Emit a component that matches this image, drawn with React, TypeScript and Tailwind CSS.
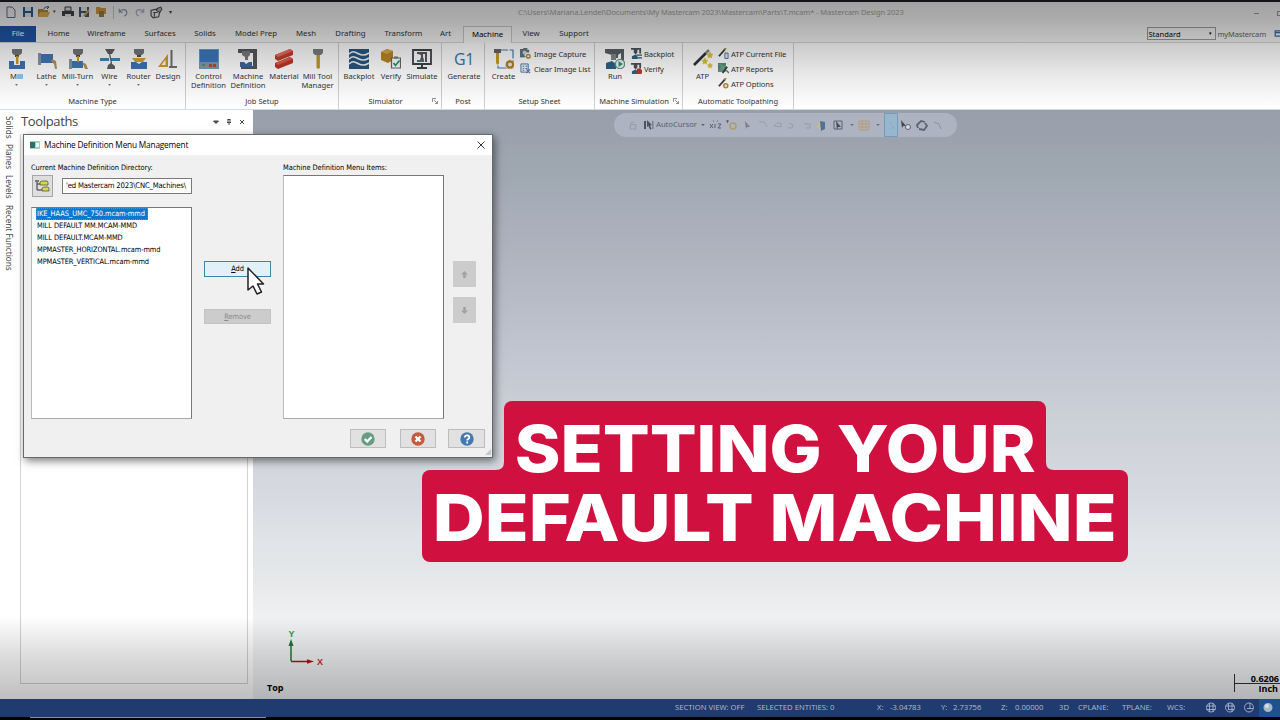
import type { ReactNode } from "react";

type Kids = { children?: ReactNode };

function Svg({ children, className = "h-5 w-5", box = "0 0 20 20" }: Kids & { className?: string; box?: string }) {
  return (
    <svg viewBox={box} className={`block shrink-0 ${className}`} fill="none">
      {children}
    </svg>
  );
}

const Spindle = () => (
  <>
    <path d="M5 0h10v4l-2 2H7L5 4z" fill="#74777b" />
    <path d="M8 6h4v2H8z" fill="#4c4f53" />
  </>
);

const MillIcon = () => (
  <Svg>
    <path d="M2 12h5v4h6v-4h5v8H2z" fill="#3b74b5" />
    <Spindle />
    <path d="M9 7h2.4v8H9z" fill="#c79a2b" />
  </Svg>
);
const LatheIcon = () => (
  <Svg>
    <path d="M1 4h3v12H1z" fill="#8a96a3" />
    <path d="M4 5h12v9H4z" fill="#3f78b5" />
    <path d="M15 10l4 2 1 8h-2l-1-5-3-3z" fill="#b59552" />
  </Svg>
);
const MillTurnIcon = () => (
  <Svg>
    <path d="M1 10h3v10H1z" fill="#8a96a3" />
    <path d="M4 12h11v7H4z" fill="#3f78b5" />
    <Spindle />
    <path d="M9 7h2v6H9z" fill="#c79a2b" />
    <path d="M14 13l4 2 2 5h-3z" fill="#b59552" />
  </Svg>
);
const WireIcon = () => (
  <Svg>
    <path d="M0 9h9v3H0zM11 9h9v3h-9z" fill="#3f86b5" />
    <path d="M5 0h10l-3 5H8zM7 20l1-4 3-2 4 3v3z" fill="#5d6064" />
    <path d="M9.500 4l2 11" stroke="#555" strokeWidth="1.2" />
  </Svg>
);
const RouterIcon = () => (
  <Svg>
    <path d="M2 13h5l3 2 3-2h5v7H2z" fill="#3b74b5" />
    <Spindle />
    <path d="M3 9h14l-3 4H6z" fill="#d6a32c" />
  </Svg>
);
const DesignIcon = () => (
  <Svg>
    <path d="M10 5v13H0zM7.500 10.500l-4 5.500h4z" fill="#d6982c" fillRule="evenodd" />
    <path d="M13.500 1v17M11 18h8" stroke="#6d7073" strokeWidth="2" />
  </Svg>
);
const ControlIcon = () => (
  <Svg>
    <path d="M0 0h20v20H0z" fill="#6f9bc9" />
    <path d="M1 1h18v12H1z" fill="#3b78bd" />
    <path d="M1 14h18v5H1z" fill="#8c979f" />
    <path d="M3 15h3v2H3z" fill="#37a06a" />
    <path d="M10 15h3v3h-3zM14 15h3v3h-3z" fill="#c14335" />
  </Svg>
);
const MachineDefIcon = () => (
  <Svg>
    <path d="M0 0h19v20H3v-3h12V4H0z" fill="#54575b" />
    <path d="M4 2h8v4l-2 2v3H7V8L4 6z" fill="#777a7e" />
    <path d="M2 13h4l2 2 3-2h3v5H2z" fill="#38699e" />
  </Svg>
);
const MaterialIcon = () => (
  <Svg>
    <path d="M1 6L16 0l3 2v4L4 12l-3-2z" fill="#c33c2c" />
    <path d="M1 6l3 2 15-6-3-2z" fill="#e0705f" />
    <path d="M1 14l15-6 3 2v4L4 20l-3-2z" fill="#bd3627" />
    <path d="M1 14l3 2 15-6-3-2z" fill="#da5c4a" />
  </Svg>
);
const ToolIcon = () => (
  <Svg>
    <path d="M5 0h10v4l-2 2H7L5 4z" fill="#7a7d80" />
    <path d="M8.5 6h3.4v13l-1.7 1-1.7-1z" fill="#c2972f" />
  </Svg>
);
const BackplotIcon = () => (
  <Svg>
    <path d="M0 0h20v20H0z" fill="#28567f" />
    <path
      d="M0 5c4-4 6-2 10 0s7 1 10-1M0 10c4-4 6-2 10 0s7 1 10-1M0 15c4-4 6-2 10 0s7 1 10-1"
      stroke="#eef4f8"
      strokeWidth="1.6"
    />
  </Svg>
);
const VerifyIcon = () => (
  <Svg>
    <path d="M0 3l6-3 6 2v9l-5 3-7-3z" fill="#ba8526" />
    <path d="M0 3l6 2 6-3-6-2z" fill="#d8a94c" />
    <path d="M10.500 9h9v10h-9z" fill="#fff" stroke="#666" strokeWidth="1.2" />
    <path d="M13 7.5h4v2h-4z" fill="#777" />
    <path d="M12.500 14l2 2.500 4-5" stroke="#239070" strokeWidth="1.7" />
  </Svg>
);
const SimulateIcon = () => (
  <Svg>
    <path d="M1 1h18v14H1z" fill="#fff" stroke="#3f4246" strokeWidth="1.8" />
    <path d="M10 15v4M5 19h10" stroke="#3f4246" strokeWidth="2" />
    <path d="M5 3h10v10h-2V5h-2v3l1 3H8l1-3V6L6 5H5z" fill="#575a5e" />
    <path d="M5 11h7v2H5z" fill="#4d7880" />
  </Svg>
);
const GenerateIcon = () => (
  <span className="flex h-5 items-center font-['Open_Sans',sans-serif] text-[16px] tracking-[-0.5px] text-[#3a729f]">G1</span>
);
const CreateIcon = () => (
  <Svg>
    <path d="M2 1h17v18H4V6" stroke="#4a7ca8" strokeWidth="1.2" strokeDasharray="12 1.5" />
    <path d="M0 0h7v4H0z" fill="#62656a" />
    <path d="M2 4h3v10l-1.5 2L2 14z" fill="#ca9a2e" />
    <circle cx="16" cy="15.5" r="5" fill="#e9e9e9" />
    <circle cx="16" cy="15.5" r="3" stroke="#b47c25" strokeWidth="2" />
    <circle cx="16" cy="15.5" r="4" stroke="#b47c25" strokeWidth="1" strokeDasharray="1.8 1.6" />
  </Svg>
);
const RunIcon = () => (
  <Svg>
    <path d="M0 0h19v12h-3V4l-3 2v3H7V6L0 4z" fill="#5a6064" />
    <path d="M6 5h5v6H6z" fill="#80868a" />
    <path d="M1 14l6-2 4 3v5H1z" fill="#2d6385" />
    <circle cx="15" cy="15" r="4.6" fill="#f4f8f5" stroke="#5a9c8c" strokeWidth="1.3" />
    <path d="M13.5 12l4.5 3-4.5 3z" fill="#3a8e7b" />
  </Svg>
);
const WandIcon = () => (
  <Svg>
    <path d="M1 16L13 4" stroke="#303236" strokeWidth="2.6" />
    <path d="M13 4l3-3" stroke="#8a8a8a" strokeWidth="2.6" />
    <path
      d="M17 3l1 2 2 .5-1.600 1.500.3 2L17 8l-2 1 .4-2L14 5.500l2-.5zM12 9l1 2 2 .5-1.600 1.500.3 2L12 14l-2 1 .4-2L9 11.500l2-.5zM17 14l.8 1.600 1.700.3-1.200 1.200.2 1.700-1.500-.8-1.500.8.3-1.700-1.300-1.200 1.700-.3z"
      fill="#dcc02f"
      stroke="#dcc02f"
      strokeWidth="0.6"
    />
  </Svg>
);

const small = "h-[11px] w-[11px]";
const box12 = "0 0 12 12";
const CaptureIcon = () => (
  <Svg className={small} box={box12}>
    <path d="M0 1h3l1-1h4v2h2v3H0zM0 5h5v5H0z" fill="#66747f" />
    <circle cx="5" cy="5" r="2.200" fill="#c9d6de" />
    <circle cx="9" cy="9" r="2" stroke="#b48a35" strokeWidth="1.600" />
    <path d="M0 9h6v1H0z" fill="#3f7f85" />
  </Svg>
);
const ClearIcon = () => (
  <Svg className={small} box={box12}>
    <path d="M1 1h8v9H1z" fill="#e9f0f8" stroke="#4c74a0" />
    <path d="M3 3.500h1.500M6 3.500h2M3 6h1.500M6 6h2M3 8h1.500" stroke="#4c74a0" />
    <path d="M7 7l4 4M11 7l-4 4" stroke="#7b6fb0" strokeWidth="1.400" />
  </Svg>
);
const MiniMachine = ({ red }: { red?: boolean }) => (
  <Svg className={small} box={box12}>
    <path d="M0 0h11v2H7v3L5 7 3 5V2H0zM9 2h2v4H9z" fill="#4c5357" />
    <path d="M1 9l4-2 2 2v3H1z" fill="#2c6480" />
    {red ? <path d="M7 6h3l2 2v3l-1 1H7l-1-2V8z" fill="#b73a2d" /> : <path d="M6 7h6v1.500H6zM6 10h6v1.500H6z" fill="#2f5577" />}
  </Svg>
);
const MiniWand = ({ kind }: { kind: "file" | "report" | "gear" }) => (
  <Svg className={small} box={box12}>
    {kind === "report" && <path d="M0 0h8v9H0zM2 2v5M4 2h3" fill="#6ea58b" stroke="#3d7c68" />}
    <path d={kind === "report" ? "M5 11l5-7" : "M1 9l7-8"} stroke="#3b3d40" strokeWidth="2" />
    {kind !== "report" && <path d="M7 2l2-2" stroke="#b39a48" strokeWidth="1.600" />}
    {kind === "file" && <path d="M7.500 5.500h3.500v6H7.500z" fill="#e8eef5" stroke="#416f9d" />}
    {kind === "gear" && <circle cx="8.500" cy="8.500" r="2.200" fill="#f6efe2" stroke="#c0892e" strokeWidth="1.700" />}
    {kind === "report" && <path d="M9 8l3 3" stroke="#498a58" strokeWidth="1.500" />}
  </Svg>
);

type Tool = { icon: ReactNode; label: string; second?: string; arrow?: boolean; cell: string };

function ToolButton({ icon, label, second, arrow, cell }: Tool) {
  return (
    <div className={`flex shrink-0 flex-col items-center ${cell}`}>
      {icon}
      <span className="mt-[3px] h-[9px] leading-[9px] whitespace-nowrap">{label}</span>
      {second && <span className="h-[9px] leading-[9px] whitespace-nowrap">{second}</span>}
      {arrow && (
        <svg viewBox="0 0 4 2" className="mt-[3px] h-[2px] w-[3px]" fill="#555">
          <path d="M0 0h4L2 2z" />
        </svg>
      )}
    </div>
  );
}

function Launcher() {
  return (
    <svg viewBox="0 0 6 6" className="h-[6px] w-[6px]" fill="none" stroke="#777" strokeWidth="0.8">
      <path d="M0.500 4V0.500H4M2 2l3.500 3.500M5.500 3v2.500H3" />
    </svg>
  );
}

function Group({ title, width, pad, launcher, children }: Kids & { title: string; width: string; pad: string; launcher?: boolean }) {
  return (
    <section className={`flex h-full shrink-0 flex-col border-r border-[#d0d0d0] ${width}`}>
      <div className={`flex h-[52px] pt-[6px] ${pad}`}>{children}</div>
      <div className="flex h-[12px] items-center">
        <span className="flex-1 text-center text-[7.500px] leading-[10px] whitespace-nowrap">{title}</span>
        {launcher && (
          <span className="pr-[3px]">
            <Launcher />
          </span>
        )}
      </div>
    </section>
  );
}

function SmallList({ rows, gap }: { rows: [ReactNode, string][]; gap: string }) {
  return (
    <div className="-mt-[3px] flex flex-col">
      {rows.map(([icon, label]) => (
        <div key={label} className={`flex h-[15px] items-center tracking-[-0.080px] ${gap}`}>
          {icon}
          <span className="leading-[10px] whitespace-nowrap">{label}</span>
        </div>
      ))}
    </div>
  );
}

function Ribbon() {
  return (
    <div className="flex h-[67px] border-b border-[#d3dbe2] bg-white text-[7.600px] text-[#343434]">
      <Group title="Machine Type" width="w-[186px]" pad="">
        <ToolButton icon={<MillIcon />} label="Mill" arrow cell="w-[33px]" />
        <ToolButton icon={<LatheIcon />} label="Lathe" arrow cell="w-[27px]" />
        <ToolButton icon={<MillTurnIcon />} label="Mill-Turn" arrow cell="w-[35px]" />
        <ToolButton icon={<WireIcon />} label="Wire" arrow cell="w-[29px]" />
        <ToolButton icon={<RouterIcon />} label="Router" arrow cell="w-[29px]" />
        <ToolButton icon={<DesignIcon />} label="Design" cell="w-[30px]" />
      </Group>
      <Group title="Job Setup" width="w-[153px]" pad="pl-[2px]">
        <ToolButton icon={<ControlIcon />} label="Control" second="Definition" cell="w-[41px]" />
        <ToolButton icon={<MachineDefIcon />} label="Machine" second="Definition" cell="w-[38px]" />
        <ToolButton icon={<MaterialIcon />} label="Material" cell="w-[34px]" />
        <ToolButton icon={<ToolIcon />} label="Mill Tool" second="Manager" cell="w-[33px]" />
      </Group>
      <Group title="Simulator" width="w-[103px]" pad="pl-[3px]" launcher>
        <ToolButton icon={<BackplotIcon />} label="Backplot" cell="w-[34px]" />
        <ToolButton icon={<VerifyIcon />} label="Verify" cell="w-[30px]" />
        <ToolButton icon={<SimulateIcon />} label="Simulate" cell="w-[32px]" />
      </Group>
      <Group title="Post" width="w-[43px]" pad="pl-[2px]">
        <ToolButton icon={<GenerateIcon />} label="Generate" cell="w-[40px]" />
      </Group>
      <Group title="Setup Sheet" width="w-[110px]" pad="pl-[2px]">
        <ToolButton icon={<CreateIcon />} label="Create" cell="w-[33px]" />
        <SmallList gap="gap-[3px]" rows={[[<CaptureIcon />, "Image Capture"], [<ClearIcon />, "Clear Image List"]]} />
      </Group>
      <Group title="Machine Simulation" width="w-[88px]" pad="pl-[4px]" launcher>
        <ToolButton icon={<RunIcon />} label="Run" cell="w-[32px]" />
        <SmallList gap="gap-[2px]" rows={[[<MiniMachine />, "Backplot"], [<MiniMachine red />, "Verify"]]} />
      </Group>
      <Group title="Automatic Toolpathing" width="w-[111px]" pad="pl-[4px]">
        <ToolButton icon={<WandIcon />} label="ATP" cell="w-[31px]" />
        <SmallList
          gap="gap-[2px]"
          rows={[
            [<MiniWand kind="file" />, "ATP Current File"],
            [<MiniWand kind="report" />, "ATP Reports"],
            [<MiniWand kind="gear" />, "ATP Options"],
          ]}
        />
      </Group>
    </div>
  );
}

function QuickAccess() {
  return (
    <div className="flex h-full w-[518px] shrink-0 items-center pb-[2px] pl-[5px]">
      <Svg className="mr-[5px] h-[12px] w-[12px]" box={box12}>
        <path d="M2 1h5l3 3v7.500H2z" fill="#eee" stroke="#58718c" />
      </Svg>
      <Svg className="mr-[4px] h-[12px] w-[12px]" box={box12}>
        <path d="M1 1h10v10H1z" fill="#285a93" />
        <path d="M3 1h6v4H3zM3 7h6v4H3z" fill="#e2e8ee" />
      </Svg>
      <Svg className="h-[12px] w-[12px]" box={box12}>
        <path d="M0 3h5l1 1h4v7H0z" fill="#b3853a" />
        <path d="M2 6h10l-2 5H0z" fill="#d9ab55" />
        <path d="M6 3c0-2 2-2 4-2M9 0l2 1-2 2" stroke="#375f84" />
      </Svg>
      <span className="mr-[6px] ml-[3px] text-[5px] text-[#333]">▾</span>
      <Svg className="mr-[4px] h-[12px] w-[12px]" box={box12}>
        <path d="M3 1h6v4H3z" fill="#ddd" stroke="#3b3e42" />
        <path d="M0 5h12v5H0z" fill="#3f4347" />
        <path d="M3 8h6v3H3z" fill="#e6e6e6" />
      </Svg>
      <Svg className="mr-[5px] h-[12px] w-[12px]" box={box12}>
        <path d="M1 1h10v10H1z" fill="#3b5877" />
        <path d="M3 1h6v4H3zM3 7h4v4H3z" fill="#e2e8ee" />
        <path d="M6 10l5-6" stroke="#d99b33" strokeWidth="2" />
      </Svg>
      <Svg className="mr-[6px] h-[12px] w-[12px]" box={box12}>
        <path d="M1 1h4l1 1h5v6H1z" fill="#cf9b43" />
        <path d="M4 5h5v6H4z" fill="#9d7a45" />
      </Svg>
      <span className="mr-[4px] h-[13px] w-px bg-[#c2c2c2]" />
      <Svg className="mr-[5px] h-[10px] w-[11px]" box={box12}>
        <path d="M1 2v4h4M1 6c2-4 9-4 9 1 0 2-1 3-3 4" stroke="#8b9bb0" strokeWidth="1.500" />
      </Svg>
      <Svg className="mr-[5px] h-[10px] w-[11px]" box={box12}>
        <path d="M11 2v4H7M11 6c-2-4-9-4-9 1 0 2 1 3 3 4" stroke="#a8b4c2" strokeWidth="1.500" />
      </Svg>
      <Svg className="h-[13px] w-[13px]" box={box12}>
        <path d="M1 4l5-1 3 2-1 5-5 1-2-2zM3 6h4M4 6v4" stroke="#4d5155" strokeWidth="1.100" />
        <path d="M7 2l3-1 1 2-2 3-3-2z" fill="#b5b8ba" stroke="#4d5155" />
      </Svg>
      <span className="ml-[6px] text-[6px] text-[#444]">▾</span>
    </div>
  );
}

const tabs: [string, string][] = [
  ["Home", "w-[45px]"],
  ["Wireframe", "w-[51px]"],
  ["Surfaces", "w-[56px]"],
  ["Solids", "w-[34px]"],
  ["Model Prep", "w-[68px]"],
  ["Mesh", "w-[32px]"],
  ["Drafting", "w-[57px]"],
  ["Transform", "w-[49px]"],
  ["Art", "w-[35px]"],
  ["Machine", "w-[49px]"],
  ["View", "w-[38px]"],
  ["Support", "w-[48px]"],
];

function TabRow() {
  return (
    <div className="flex h-[17px] border-b border-[#d6d6d6] text-[7.800px] text-[#333]">
      <div className="flex w-[36px] items-center justify-center bg-[#2155a8] text-white">File</div>
      {tabs.map(([t, w]) => (
        <div
          key={t}
          className={`flex shrink-0 items-center justify-center whitespace-nowrap ${w} ${
            t === "Machine" ? "-mb-px border-x border-t border-[#c8c8c8] bg-[#fafafa] text-black" : ""
          }`}
        >
          {t}
        </div>
      ))}
      <div className="ml-auto flex h-[15px] items-center">
        <div className="flex h-[13px] w-[69px] items-center justify-between border border-[#9b9b9b] bg-[#f5f5f5] px-[1px] text-[7.500px] text-black">
          <span className="leading-[10px]">Standard</span>
          <span className="pr-[2px] text-[5px]">▾</span>
        </div>
        <span className="ml-[2px] pt-[3px] text-[7.500px] tracking-[-0.150px] text-[#666]">myMastercam</span>
        <svg viewBox="0 0 6 9" className="ml-[8px] h-[8px] w-[6px]" fill="none" stroke="#3b6da5" strokeWidth="1.400">
          <path d="M7 1H1v6h6M1 3h6" />
        </svg>
      </div>
    </div>
  );
}

function Toolpaths() {
  return (
    <div className="flex w-[234px] shrink-0 flex-col bg-white">
      <div className="flex h-[24px] items-center">
        <span className="w-[192px] pl-[2px] font-['Open_Sans','Noto_Sans',sans-serif] text-[13px] tracking-[-0.350px] text-[#404448]">
          Toolpaths
        </span>
        <svg viewBox="0 0 36 8" className="h-[8px] w-[36px]" fill="none" stroke="#444" strokeWidth="1">
          <path d="M2.500 3h5L5 5.500z" fill="#444" />
          <path d="M16.500 1.500h3M17 1.500v3M19 1.500v3M16 4.500h4M18 4.500v2.500M29 2l4 4M33 2l-4 4" />
        </svg>
      </div>
      <div className="ml-px h-[550px] w-[228px] border border-t-0 border-[#d2d2d2] bg-white" />
    </div>
  );
}

function SideTabs() {
  const items: [string, string][] = [
    ["Solids", "h-[28px]"],
    ["Planes", "h-[31px]"],
    ["Levels", "h-[30px]"],
    ["Recent Functions", "h-[70px]"],
  ];
  return (
    <div className="flex w-[19px] shrink-0 flex-col items-center bg-white pt-[6px] pr-[2px]">
      {items.map(([t, h]) => (
        <span key={t} className={`text-[8.200px] leading-[12px] whitespace-nowrap text-[#43464a] [writing-mode:vertical-rl] ${h}`}>
          {t}
        </span>
      ))}
    </div>
  );
}

function AutoCursorBar() {
  return (
    <div className="flex h-[24px] w-[343px] items-center rounded-full bg-[#adb3c0] pl-[15px] text-[7.800px] text-[#596270]">
      <svg viewBox="0 0 8 10" className="h-[9px] w-[8px] opacity-40" fill="none" stroke="#6b7482">
        <path d="M2 4V2c0-1 3-1 3 0M1 4h6v5H1z" />
      </svg>
      <svg viewBox="0 0 10 10" className="ml-[7px] h-[10px] w-[10px]" fill="#4b5460">
        <path d="M0 1h2v8H0zM3 0l5 5-2 .5L7.500 9 6 9.500 4.500 6 3 7z" />
        <path d="M8 1h1.500v8H8z" opacity=".5" />
      </svg>
      <span className="ml-[2px] w-[45px] tracking-[-0.100px] whitespace-nowrap">AutoCursor</span>
      <svg viewBox="0 0 244 24" className="h-[24px] w-[244px]" fill="none" stroke="#5b6472">
        <path d="M0 11h4l-2 2z" fill="#5b6472" stroke="none" />
        <path d="M9 15l3-4M9 11l3 4M14 11v4M17 11h3l-3 4h3M12 8h1M16 8h1" />
        <path d="M25 8h3M26.500 7v3" />
        <circle cx="32" cy="13" r="3" stroke="#b49a66" strokeWidth="1.500" />
        <path d="M44 8l5 6h-3l-1 2z" fill="#777f8d" stroke="none" />
        <path d="M58 9h5l3 5M73 13l3-3h4v4zM88 10l4 2-1 3h-4M103 11h6v4h-4" opacity=".25" />
        <path d="M115 14l4-6 4 2v5l-4 2z" fill="#d1bb80" stroke="none" opacity=".7" />
        <path d="M119 8l5 1v7l-4 2z" fill="#4e7396" stroke="none" />
        <path d="M133 8v8h8M133 8h8v8" />
        <path d="M135 8l5 6h-3l-1 3z" fill="#424c58" stroke="none" />
        <path d="M149 11h4l-2 2z" fill="#6b7482" stroke="none" />
        <path d="M158 8h10v9h-10zM158 11h10M158 14h10M161.500 8v9M165 8v9" stroke="#b69e7a" />
        <path d="M175 11h4l-2 2z" fill="#6b7482" stroke="none" />
        <path d="M183.500 .5h13v23h-13z" fill="#98b6ce" stroke="#739cba" />
        <path d="M188 9l5 5M190 15h4" stroke="#82b0bd" />
        <path d="M200 7l5 6h-3l-1 2z" fill="#3f4954" stroke="none" />
        <circle cx="207" cy="14" r="2.500" fill="#d8dde2" />
        <path d="M217 15l-1-3 4-4 4 1M218 16l5 1 3-4-2-3" strokeWidth="1.800" />
        <path d="M233 9l5 2 2 5" opacity=".4" />
      </svg>
    </div>
  );
}

function Viewport() {
  return (
    <main className="flex flex-1 flex-col bg-[linear-gradient(180deg,#989eaa_0%,#a0a9b2_12%,#a6acb8_16%,#b0b5c0_26%,#c1c5d0_41%,#cfd3d9_56%,#d7dbe1_66%,#dfe3e7_72%,#e6e8ea_80%,#f1f2f4_87%,#f0f1f2_100%)]">
      <div className="flex h-[519px] pt-[3px] pl-[361px]">
        <AutoCursorBar />
      </div>
      <svg viewBox="0 0 45 38" className="ml-[32px] h-[38px] w-[45px] font-['Liberation_Sans',sans-serif]">
        <path d="M6 32V16" stroke="#1d7a2d" strokeWidth="1.500" />
        <path d="M6 10l2.500 7h-5z" fill="#1d7a2d" />
        <path d="M6 32.500h16" stroke="#a31b1b" strokeWidth="1.500" />
        <path d="M29 32.500l-7-2.200v4.400z" fill="#a31b1b" />
        <text x="3.500" y="7.500" fontSize="9" fontWeight="bold" fill="#2d9a3a">Y</text>
        <text x="32" y="36" fontSize="9" fontWeight="bold" fill="#cf2429">X</text>
      </svg>
      <div className="flex flex-1 justify-between pt-[7px] pl-[14px] font-['Open_Sans',sans-serif] text-[9px] font-bold text-black">
        <span className="pt-[7px] leading-[13px]">Top</span>
        <div className="flex h-[18px] w-[46px] flex-col border-l border-[#333] text-right">
          <span className="border-b border-[#333] pr-px leading-[9px]">0.6206</span>
          <span className="pr-[2px] leading-[9px]">Inch</span>
        </div>
      </div>
    </main>
  );
}

const status: [string, string][] = [
  ["SECTION VIEW: OFF", "w-[82px]"],
  ["SELECTED ENTITIES: 0", "w-[120px]"],
  ["X:", "w-[13px]"],
  ["-3.04783", "w-[51px]"],
  ["Y:", "w-[12px]"],
  ["2.73756", "w-[48px]"],
  ["Z:", "w-[14px]"],
  ["0.00000", "w-[44px]"],
  ["3D", "w-[19px]"],
  ["CPLANE:", "w-[44px]"],
  ["TPLANE:", "w-[45px]"],
  ["WCS:", "w-[38px]"],
];

function StatusBar() {
  return (
    <footer className="flex h-[21px] flex-col bg-black">
      <div className="flex h-[18px] items-center bg-[#1f3b70] pl-[675px] font-['Open_Sans',sans-serif] text-[7.700px] text-[#b3bccb]">
        {status.map(([t, w]) => (
          <span key={t} className={`shrink-0 whitespace-nowrap ${w}`}>
            {t}
          </span>
        ))}
        <svg viewBox="0 0 75 18" className="h-[18px] w-[75px]" fill="none" stroke="#a9b5c7" strokeWidth=".9">
          <path d="M54 0h21v18H54z" fill="#21508e" stroke="none" />
          <circle cx="6" cy="8.500" r="4.500" />
          <path d="M1.500 7h9M1.500 10.500h9M4.500 4v9M8 4v9" />
          <circle cx="25" cy="8.500" r="4.500" />
          <path d="M20.500 7h9M23 10.500h6M23.500 4v7M27 4v9" />
          <circle cx="44" cy="8.500" r="4.500" />
          <path d="M42 9.500h6M45 4v6" />
          <circle cx="63" cy="8.500" r="4.500" fill="#a8b8c5" stroke="none" />
          <circle cx="62" cy="7" r="2" fill="#d6dfe5" stroke="none" />
        </svg>
      </div>
      <div className="ml-[30px] h-px w-[236px] bg-[#8290a3]" />
    </footer>
  );
}

const files: [string, string][] = [
  ["IKE_HAAS_UMC_750.mcam-mmd", "tracking-[-0.060px]"],
  ["MILL DEFAULT MM.MCAM-MMD", "tracking-[-0.050px]"],
  ["MILL DEFAULT.MCAM-MMD", "tracking-[-0.050px]"],
  ["MPMASTER_HORIZONTAL.mcam-mmd", "tracking-[-0.100px]"],
  ["MPMASTER_VERTICAL.mcam-mmd", "tracking-[-0.100px]"],
];

function FooterButton({ color, glyph, width }: { color: string; glyph: ReactNode; width: string }) {
  return (
    <div className={`flex h-[19px] items-center justify-center border border-[#bdbdbd] bg-[#e1e1e1] ${width}`}>
      <svg viewBox="0 0 14 14" className="h-[14px] w-[14px]" fill="none" stroke="#fff" strokeWidth="2.300">
        <circle cx="7" cy="7" r="6.700" fill={color} stroke="none" />
        {glyph}
      </svg>
    </div>
  );
}

const listBox = "border border-t-[#777] border-r-[#777] border-b-[#aaa] border-l-[#bbb] bg-white";

function ArrowButton({ d }: { d: string }) {
  return (
    <div className="flex h-[26px] w-[23px] items-center justify-center bg-[#cccccc]">
      <svg viewBox="0 0 8 8" className="h-[7px] w-[7px]" fill="#a2a2a2">
        <path d={d} />
      </svg>
    </div>
  );
}

function Dialog() {
  return (
    <div className="absolute top-[134px] left-[23px] flex h-[324px] w-[470px] flex-col border border-[#66696d] bg-[#f0f0f0] font-['DejaVu_Sans_Condensed','DejaVu_Sans',sans-serif] text-[7.400px] tracking-[-0.050px] text-black shadow-[2px_3px_8px_rgba(0,0,0,0.5)]">
      <div className="flex h-[20px] items-center bg-white pr-[7px] pl-[6px]">
        <svg viewBox="0 0 10 8" className="h-[8px] w-[10px]">
          <path d="M0 0h10v8H0z" fill="#a9cfc4" />
          <path d="M0 1h5v6H0z" fill="#2f6f6a" />
          <path d="M6 2h3v4H6z" fill="#eef5f5" />
        </svg>
        <span className="ml-[4px] font-['Open_Sans',sans-serif] text-[8.300px] tracking-[-0.200px]">
          Machine Definition Menu Management
        </span>
        <svg viewBox="0 0 8 8" className="ml-auto h-[8px] w-[8px]" stroke="#333" strokeWidth="1">
          <path d="M.5.5l7 7M7.500.5l-7 7" />
        </svg>
      </div>
      <div className="flex h-[264px] pl-[7px]">
        <div className="flex w-[161px] flex-col pt-[8px]">
          <span className="h-[12px] leading-[10px] whitespace-nowrap">Current Machine Definition Directory:</span>
          <div className="flex h-[32px] items-center pb-[10px] pl-px">
            <div className="flex h-[22px] w-[21px] items-center justify-center border border-[#a5a5a5] bg-[#dedede]">
              <svg viewBox="0 0 15 14" className="h-[14px] w-[15px]">
                <path d="M2 2v9h5M2 5h5" stroke="#333" fill="none" />
                <path d="M5 3l2-1h5l1 1v3H5zM7 9l2-1h4l1 1v3H7z" fill="#d6d74c" stroke="#444" strokeWidth=".7" />
                <path d="M0 1h4v2H0z" fill="#777" />
              </svg>
            </div>
            <div className="ml-[9px] flex h-[16px] flex-1 items-center overflow-hidden border border-[#7a7a7a] bg-white pl-[3px] text-[7.700px] whitespace-nowrap">
              <span className="tracking-[-0.200px]">'ed Mastercam 2023\CNC_Machines\</span>
            </div>
          </div>
          <ul className={`h-[212px] pl-[4px] ${listBox}`}>
            {files.map(([f, tracking], i) => (
              <li
                key={f}
                className={`flex h-[11.800px] w-fit items-center pl-px whitespace-nowrap ${tracking} ${
                  i === 0 ? "bg-[#0b78d0] pr-[3px] text-white outline-1 -outline-offset-1 outline-dotted outline-[#5f92b0]" : ""
                }`}
              >
                {f}
              </li>
            ))}
          </ul>
        </div>
        <div className="ml-[12px] w-[67px] pt-[106px]">
          <div className="flex h-[16px] items-center justify-center border border-[#3a87a8] bg-[#e2f0f9]">
            <span>
              <u>A</u>dd
            </span>
          </div>
          <div className="mt-[32px] flex h-[15px] items-center justify-center border border-[#c3c3c3] bg-[#cccccc] text-[#8b8b8b]">
            <span>
              <u>R</u>emove
            </span>
          </div>
        </div>
        <div className="ml-[12px] w-[161px] pt-[8px]">
          <span className="block h-[12px] leading-[10px] whitespace-nowrap">Machine Definition Menu Items:</span>
          <div className={`h-[244px] ${listBox}`} />
        </div>
        <div className="ml-[9px] flex flex-col gap-[10px] pt-[106px]">
          <ArrowButton d="M4 0l4 4H5.500v4h-3V4H0z" />
          <ArrowButton d="M4 8L0 4h2.500V0h3v4H8z" />
        </div>
      </div>
      <div className="flex pt-[10px] pl-[326px]">
        <FooterButton width="w-[36px]" color="#659c84" glyph={<path d="M3.700 7l2.500 2.500 4.300-4.500" />} />
        <span className="w-[14px]" />
        <FooterButton width="w-[36px]" color="#c8583a" glyph={<path d="M4.500 4.500l5 5M9.500 4.500l-5 5" />} />
        <span className="w-[12px]" />
        <FooterButton width="w-[37px]" color="#4279b3" glyph={<path d="M4.800 5.500c0-3 4.500-2.600 4.500 0C9.300 7 7.200 7 7.200 8.500M7.200 9.500v2" strokeWidth="1.800" />} />
      </div>
      <svg viewBox="0 0 8 8" className="mt-auto ml-auto h-[8px] w-[8px] shrink-0 -translate-y-px" fill="#c4c8c6">
        <path d="M7 1v6H1z" />
      </svg>
      <svg viewBox="0 0 20 30" className="absolute top-[131px] left-[223px] h-[30px] w-[20px]">
        <path d="M1 2v22l5-4 4 8 4.500-2-4-8h6z" fill="#fff" stroke="#222" strokeWidth="1.500" strokeLinejoin="round" />
      </svg>
    </div>
  );
}

function Headline() {
  return (
    <div className="absolute top-[401px] left-[422px] flex w-[706px] flex-col items-center font-['Inter',sans-serif] text-[65px] leading-none font-extrabold text-white">
      <div className="flex items-end">
        <svg viewBox="0 0 8 8" className="h-[8px] w-[8px]">
          <path d="M8 0v8H0q8 0 8-8z" fill="#d01140" />
        </svg>
        <div className="flex h-[69px] w-[542px] items-center justify-center rounded-t-[8px] bg-[#d01140]">
          <span className="block translate-y-[13px] scale-x-[1.067] whitespace-nowrap">SETTING YOUR</span>
        </div>
        <svg viewBox="0 0 8 8" className="h-[8px] w-[8px]">
          <path d="M0 0v8h8q-8 0-8-8z" fill="#d01140" />
        </svg>
      </div>
      <div className="flex h-[92px] w-[706px] items-center justify-center rounded-[8px] bg-[#d01140]">
        <span className="block translate-y-px scale-x-[1.108] whitespace-nowrap">DEFAULT MACHINE</span>
      </div>
    </div>
  );
}

export default function App() {
  return (
    <div className="relative flex h-[720px] w-[1280px] flex-col overflow-hidden bg-white font-['Noto_Sans','Open_Sans',sans-serif]">
      <header className="flex h-[26px] items-center border-t-2 border-[#161418] bg-[#f4f4f4] pb-[2px]">
        <QuickAccess />
        <span className="text-[7.500px] tracking-[-0.070px] whitespace-nowrap text-[#a3a3a3]">
          C:\Users\Mariana.Lendel\Documents\My Mastercam 2023\Mastercam\Parts\T.mcam* - Mastercam Design 2023
        </span>
        <span className="ml-auto h-px w-[5px] bg-[#999]" />
        <span className="ml-[18px] h-[5px] w-[3px] border border-r-0 border-[#999]" />
      </header>
      <div className="bg-[#f5f5f5]">
        <TabRow />
      </div>
      <Ribbon />
      <div className="flex h-[589px]">
        <SideTabs />
        <Toolpaths />
        <Viewport />
      </div>
      <div className="pointer-events-none absolute inset-x-0 top-[2px] h-[106px] bg-[linear-gradient(180deg,rgba(0,0,0,0.34)_0%,rgba(0,0,0,0.29)_18%,rgba(0,0,0,0.21)_38%,rgba(0,0,0,0.09)_68%,rgba(0,0,0,0)_100%)]" />
      <div className="pointer-events-none absolute inset-x-0 top-[616px] h-[83px] bg-[linear-gradient(180deg,rgba(0,0,0,0)_0%,rgba(0,0,0,0.13)_45%,rgba(0,0,0,0.25)_100%)]" />
      <StatusBar />
      <Dialog />
      <Headline />
    </div>
  );
}
